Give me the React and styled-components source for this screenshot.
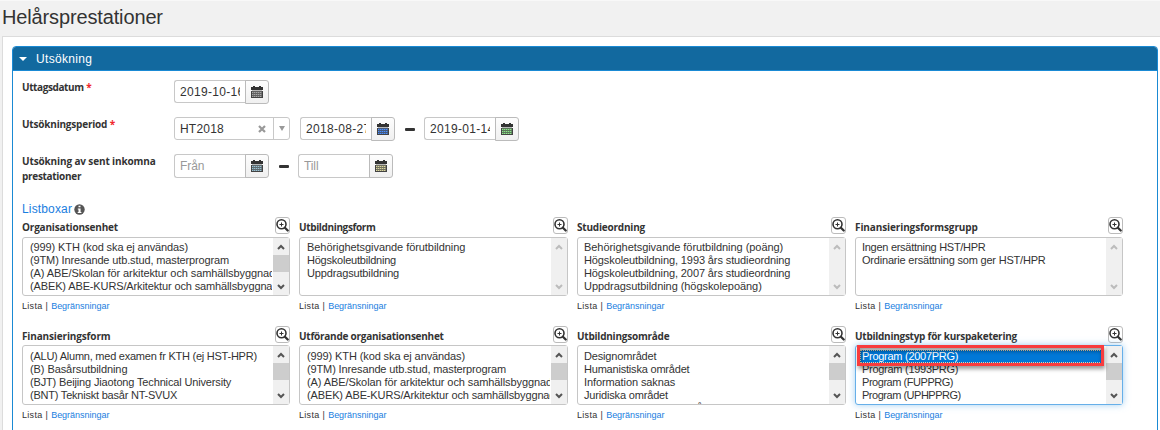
import React from "react";
import styled, { createGlobalStyle } from "styled-components";

const GlobalStyle = createGlobalStyle`
  * { box-sizing: border-box; }
  html, body { margin: 0; height: 430px; overflow: hidden; background: #f1f1f1; }
  body { font-family: "Liberation Sans", Arial, sans-serif; color: #333; font-size: 11px; }
`;

const Page = styled.div`
  display: flex;
  flex-direction: column;
  height: 430px;
  border-top: 1px solid #f8f8f8;
  overflow: hidden;
`;

const Title = styled.h1`
  flex: none;
  margin: 0;
  height: 35px;
  padding-left: 2px;
  font-size: 20px;
  font-weight: 400;
  line-height: 33px;
  letter-spacing: -0.14px;
`;

const Content = styled.main`
  flex: none;
  height: 394px;
  margin-left: 2px;
  padding: 9px 2px 0 9px;
  background: #fff;
  border: solid #dcdcdc;
  border-width: 1px 0 0 1px;
`;

const Panel = styled.section`
  height: 400px;
  border: 1px solid #1a8ad4;
  border-radius: 4px 4px 0 0;
  overflow: hidden;
`;

const PanelHeader = styled.header`
  display: flex;
  align-items: center;
  gap: 9px;
  height: 24px;
  padding-left: 6px;
  background: #12699f;
  border-bottom: 1px solid #1a8ad4;
  color: #fff;
  font-size: 12px;
  letter-spacing: 0.33px;
`;

const PanelBody = styled.div`
  padding: 9px 0 0 9px;
`;

const FormRow = styled.div`
  display: flex;
  height: 37px;
`;

const Label = styled.label`
  width: 152px;
  font-family: "Open Sans", sans-serif;
  font-size: 10px;
  font-weight: 700;
  line-height: 15px;
`;

const LabelText = styled.span`
  letter-spacing: ${(p) => p.$track}px;
`;

const Required = styled.span`
  color: #f0282d;
`;

const DateGroup = styled.div`
  display: flex;
  width: 95px;
  height: 24px;
`;

const DateBox = styled.div`
  width: 72px;
  height: ${(p) => p.$height || 23}px;
  padding-left: 5px;
  border: 1px solid #c8c8c8;
  border-right-width: 0;
  border-radius: 3px 0 0 3px;
  background: #fff;
  color: ${(p) => (p.$empty ? "#999" : "#333")};
  font-size: 12px;
  line-height: 23px;
  letter-spacing: ${(p) => (p.$empty ? "-0.1px" : "0.3px")};
`;

const Clip = styled.div`
  width: 60px;
  overflow: hidden;
  white-space: nowrap;
`;

const CalendarButton = styled.button`
  display: flex;
  align-items: flex-start;
  justify-content: center;
  width: 24px;
  height: 24px;
  margin-left: -1px;
  padding: 5px 0 0;
  border: 1px solid #bbb;
  border-radius: 0 3px 3px 0;
  background: linear-gradient(#fdfdfd, #f0f0f0);
`;

const Combo = styled.div`
  display: flex;
  width: 116px;
  height: 23px;
  margin-right: 10px;
  border: 1px solid #c8c8c8;
  border-radius: 3px;
  font-size: 12px;
  line-height: 22px;
  letter-spacing: 0.2px;
`;

const ComboValue = styled.span`
  width: 78px;
  padding-left: 5px;
`;

const ComboClear = styled.span`
  display: flex;
  align-items: center;
  width: 20px;
  padding-left: 5px;
`;

const ComboArrow = styled.span`
  display: flex;
  align-items: center;
  justify-content: center;
  width: 16px;
  border-left: 1px solid #c8c8c8;
`;

const Dash = styled.span`
  width: 10px;
  height: 3px;
  margin: 11px 9px 0 10px;
  border-radius: 1px;
  background: #333;
`;

const ListHeading = styled.div`
  display: flex;
  align-items: center;
  gap: 2px;
  height: 16px;
  margin-top: 10px;
  color: #1a7ee0;
  font-size: 12px;
  letter-spacing: 0.15px;
`;

const ListGrid = styled.div`
  display: grid;
  grid-template-columns: 268px 269px 269px 268px;
  column-gap: 9px;
  grid-auto-rows: 109px;
`;

const ListHead = styled.div`
  display: flex;
  justify-content: space-between;
  height: ${(p) => (p.$tall ? 19 : 20)}px;
`;

const ListTitle = styled.span`
  padding-top: 3px;
  font-family: "Open Sans", sans-serif;
  font-size: 10px;
  font-weight: 700;
  line-height: 14px;
  letter-spacing: ${(p) => p.$track}px;
  white-space: nowrap;
`;

const ZoomButton = styled.button`
  display: flex;
  align-items: center;
  justify-content: center;
  width: 15px;
  height: 17px;
  padding: 0;
  border: 1px solid #bbb;
  border-radius: 3px;
  background: #fff;
`;

const ListBox = styled.div`
  position: relative;
  display: flex;
  height: ${(p) => (p.$tall ? 60 : 59)}px;
  border: 1px solid ${(p) => (p.$focused ? "#66afe9" : "#c6c6c6")};
  border-radius: 3px;
  background: #fff;
  box-shadow: ${(p) => (p.$focused ? "0 0 7px rgba(102, 175, 233, 0.6)" : "none")};
`;

const Options = styled.ul`
  flex: 1;
  min-width: 0;
  margin: 0 1px 0 0;
  padding: ${(p) => (p.$tall ? 4 : 3)}px 0 0 ${(p) => p.$indent}px;
  overflow: hidden;
  list-style: none;
`;

const Option = styled.li`
  height: 13px;
  margin: 0 ${(p) => (p.$selected ? 3 : 0)}px 0 -2px;
  padding-left: 2px;
  font-size: 11px;
  line-height: 13px;
  letter-spacing: ${(p) => p.$track}px;
  white-space: nowrap;
  color: ${(p) => (p.$selected ? "#fff" : "#333")};
  background: ${(p) => (p.$selected ? "#0078d7" : "transparent")};
  outline: ${(p) => (p.$selected ? "1px dotted #f0d8b0" : "none")};
  outline-offset: -1px;
`;

const ScrollTrack = styled.div`
  display: flex;
  flex-direction: column;
  align-items: center;
  width: 16px;
  padding: 6px 0 5px;
  background: #f0f0f0;
`;

const ScrollThumb = styled.div`
  width: 16px;
  height: 17px;
  margin: 5px 0 auto;
  background: ${(p) => (p.$hidden ? "transparent" : "#cdcdcd")};
`;

const Marker = styled.div`
  position: absolute;
  left: 1px;
  top: -1px;
  width: 247px;
  height: 21px;
  border: 3px solid #f83c3e;
  box-shadow: 1px 3px 4px rgba(0, 0, 0, 0.4), inset 1px 3px 4px rgba(0, 0, 0, 0.4);
`;

const ListFooter = styled.div`
  display: flex;
  gap: 3px;
  padding-top: 4px;
  font-size: 9px;
  line-height: 13px;
  letter-spacing: 0.3px;
`;

const Link = styled.a`
  color: #1a7ee0;
  letter-spacing: -0.02px;
`;

function CalendarIcon({ tint }) {
  return (
    <svg width="12" height="12" viewBox="0 0 12 12" shapeRendering="crispEdges">
      <path d="M2 0h2v1h4V0h2v1h2v3H0V1h2z" fill="#333" />
      <path d="M0 5h12v7H0z" fill="#444" />
      <path d="M1 4h10v1H1z" fill="#b9b9b9" />
      <path d="M1 5h10v6H1z" fill={tint} opacity="0.3" />
      <path
        d="M1 6.5h10M1 8.5h10M1 10.5h10"
        stroke={tint}
        strokeWidth="1"
        strokeDasharray="1 1"
      />
      <path d="M1 6.5h10M1 8.5h10M1 10.5h10" stroke={tint} strokeWidth="1" opacity="0.35" />
    </svg>
  );
}

function MagnifierIcon() {
  return (
    <svg width="13" height="13" viewBox="0 0 13 13" fill="none" stroke="#333">
      <circle cx="5.5" cy="5.3" r="4.5" strokeWidth="1.6" />
      <path d="M3.5 5.5h4M5.5 3.5v4" strokeWidth="1" />
      <path d="M8.9 8.7l2.8 2.8" strokeWidth="2.3" strokeLinecap="round" />
    </svg>
  );
}

function InfoIcon() {
  return (
    <svg width="11" height="11" viewBox="0 0 11 11">
      <circle cx="5.5" cy="5.5" r="5.2" fill="#555" />
      <path d="M4.5 1.7h2v1.6h-2zM3.8 4.5h2.8v3.4h.8V9H3.7V7.9h.8V5.6h-.7z" fill="#fff" />
    </svg>
  );
}

function Chevron({ down, muted }) {
  return (
    <svg width="8" height="6" viewBox="0 0 8 6" fill="none">
      <path
        d={down ? "M1 1l3 3 3-3" : "M1 5l3-3 3 3"}
        stroke={muted ? "#bcbcbc" : "#555"}
        strokeWidth="2"
      />
    </svg>
  );
}

function DateField({ value, placeholder, tint, height }) {
  return (
    <DateGroup>
      <DateBox $empty={!value} $height={height}>
        <Clip>{value || placeholder}</Clip>
      </DateBox>
      <CalendarButton>
        <CalendarIcon tint={tint} />
      </CalendarButton>
    </DateGroup>
  );
}

function ListField({ title, track, options, indent, scrollable, selected, tall }) {
  const focused = selected !== undefined;
  return (
    <div>
      <ListHead $tall={tall}>
        <ListTitle $track={track}>{title}</ListTitle>
        <ZoomButton>
          <MagnifierIcon />
        </ZoomButton>
      </ListHead>
      <ListBox $focused={focused} $tall={tall}>
        <Options $indent={indent} $tall={tall}>
          {options.map(([text, spacing], i) => (
            <Option key={text} $track={spacing} $selected={i === selected}>
              {text}
            </Option>
          ))}
        </Options>
        <ScrollTrack>
          <Chevron muted={!scrollable} />
          <ScrollThumb $hidden={!scrollable} />
          <Chevron down muted={!scrollable} />
        </ScrollTrack>
        {focused && <Marker />}
      </ListBox>
      <ListFooter>
        <span>Lista</span>
        <span>|</span>
        <Link>Begränsningar</Link>
      </ListFooter>
    </div>
  );
}

// Each option is [text, letter spacing in px].
const units = [
  ["(999) KTH (kod ska ej användas)", -0.11],
  ["(9TM) Inresande utb.stud, masterprogram", -0.13],
  ["(A) ABE/Skolan för arkitektur och samhällsbyggnad", -0.09],
  ["(ABEK) ABE-KURS/Arkitektur och samhällsbyggnad", -0.13],
];

const lists = [
  { title: "Organisationsenhet", track: -0.18, indent: 7, scrollable: true, options: units },
  {
    title: "Utbildningsform",
    track: -0.36,
    indent: 7,
    options: [
      ["Behörighetsgivande förutbildning", -0.06],
      ["Högskoleutbildning", -0.22],
      ["Uppdragsutbildning", -0.15],
    ],
  },
  {
    title: "Studieordning",
    track: -0.2,
    indent: 6,
    options: [
      ["Behörighetsgivande förutbildning (poäng)", -0.05],
      ["Högskoleutbildning, 1993 års studieordning", -0.11],
      ["Högskoleutbildning, 2007 års studieordning", -0.11],
      ["Uppdragsutbildning (högskolepoäng)", -0.06],
    ],
  },
  {
    title: "Finansieringsformsgrupp",
    track: -0.11,
    indent: 6,
    options: [
      ["Ingen ersättning HST/HPR", -0.28],
      ["Ordinarie ersättning som ger HST/HPR", -0.2],
    ],
  },
  {
    title: "Finansieringsform",
    track: -0.14,
    indent: 7,
    scrollable: true,
    tall: true,
    options: [
      ["(ALU) Alumn, med examen fr KTH (ej HST-HPR)", -0.24],
      ["(B) Basårsutbildning", -0.08],
      ["(BJT) Beijing Jiaotong Technical University", -0.15],
      ["(BNT) Tekniskt basår NT-SVUX", -0.22],
    ],
  },
  {
    title: "Utförande organisationsenhet",
    track: -0.24,
    indent: 7,
    scrollable: true,
    tall: true,
    options: units,
  },
  {
    title: "Utbildningsområde",
    track: -0.23,
    indent: 6,
    scrollable: true,
    tall: true,
    options: [
      ["Designområdet", -0.17],
      ["Humanistiska området", -0.2],
      ["Information saknas", -0.1],
      ["Juridiska området", -0.17],
      ["\u2003\u2003\u2003\u2003\u2003\u2003\u2003\u2003\u2003\u2003Å", 0.2],
    ],
  },
  {
    title: "Utbildningstyp för kurspaketering",
    track: -0.26,
    indent: 6,
    scrollable: true,
    tall: true,
    selected: 0,
    options: [
      ["Program (2007PRG)", -0.28],
      ["Program (1993PRG)", -0.28],
      ["Program (FUPPRG)", -0.46],
      ["Program (UPHPPRG)", -0.48],
    ],
  },
];

export default function App() {
  return (
    <Page>
      <GlobalStyle />
      <Title>Helårsprestationer</Title>
      <Content>
        <Panel>
          <PanelHeader>
            <svg width="8" height="4" viewBox="0 0 8 4">
              <path d="M0 0h8L4 4z" fill="#fff" />
            </svg>
            Utsökning
          </PanelHeader>
          <PanelBody>
            <FormRow>
              <Label>
                <LabelText $track={-0.4}>Uttagsdatum</LabelText> <Required>*</Required>
              </Label>
              <DateField value="2019-10-16" tint="#aaaaaa" />
            </FormRow>
            <FormRow>
              <Label>
                <LabelText $track={-0.2}>Utsökningsperiod</LabelText> <Required>*</Required>
              </Label>
              <Combo>
                <ComboValue>HT2018</ComboValue>
                <ComboClear>
                  <svg width="8" height="8" viewBox="0 0 8 8">
                    <path d="M1 1l6 6M7 1L1 7" stroke="#999" strokeWidth="2.2" />
                  </svg>
                </ComboClear>
                <ComboArrow>
                  <svg width="6" height="5" viewBox="0 0 6 5">
                    <path d="M0 0h6L3 5z" fill="#999" />
                  </svg>
                </ComboArrow>
              </Combo>
              <DateField value="2018-08-27" tint="#4a90ff" />
              <Dash />
              <DateField value="2019-01-14" tint="#8fe98a" />
            </FormRow>
            <FormRow>
              <Label>
                <LabelText $track={-0.13}>Utsökning av sent inkomna</LabelText>
                <br />
                <LabelText $track={-0.3}>prestationer</LabelText>
              </Label>
              <DateField placeholder="Från" tint="#9cc4d4" height={24} />
              <Dash />
              <DateField placeholder="Till" tint="#dcd8a0" height={24} />
            </FormRow>
            <ListHeading>
              Listboxar
              <InfoIcon />
            </ListHeading>
            <ListGrid>
              {lists.map((list) => (
                <ListField key={list.title} {...list} />
              ))}
            </ListGrid>
          </PanelBody>
        </Panel>
      </Content>
    </Page>
  );
}
